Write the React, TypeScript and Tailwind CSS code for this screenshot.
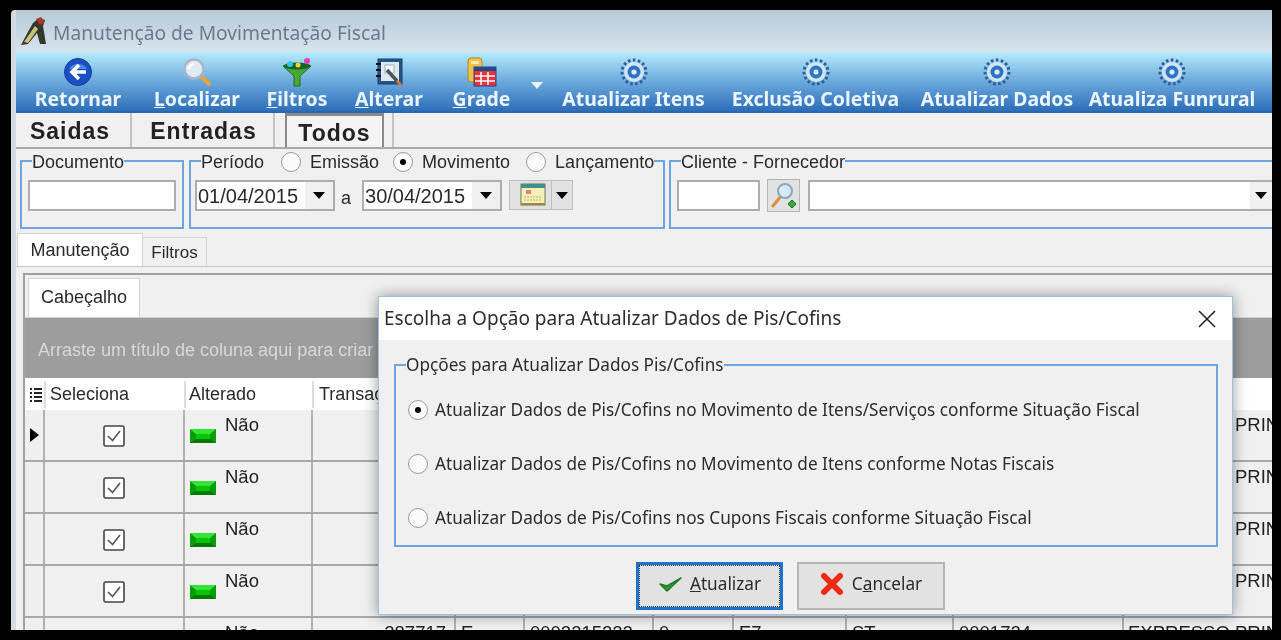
import type { ReactNode } from 'react';

function GearIcon() {
  return (
    <svg width="28" height="28" viewBox="0 0 28 28">
      <circle cx="14" cy="14" r="12" fill="none" stroke="#2f5f9c" strokeWidth="3" strokeDasharray="2.6 2.4" />
      <circle cx="14" cy="14" r="10" fill="#cfe4f5" />
      <circle cx="14" cy="14" r="6.5" fill="#2f74c0" />
      <circle cx="14" cy="14" r="2.6" fill="#dcecf8" />
    </svg>
  );
}

function BackIcon() {
  return (
    <svg width="30" height="30" viewBox="0 0 30 30">
      <circle cx="15" cy="15" r="13.5" fill="#1a50c4" stroke="#123c9a" />
      <path d="M6 12 A10 9 0 0 1 24 12 Z" fill="#4f86e6" />
      <path d="M16 8 L9 15 L16 22 M10 15 H23" fill="none" stroke="#fff" strokeWidth="3.6" />
    </svg>
  );
}

function LensIcon() {
  return (
    <svg width="30" height="30" viewBox="0 0 30 30">
      <path d="M18 18 L27 27" stroke="#e9a53a" strokeWidth="4" strokeLinecap="round" />
      <circle cx="12" cy="12" r="9.5" fill="#dcebf5" stroke="#a9b7c4" strokeWidth="2.5" />
      <path d="M7 12 A5 5 0 0 1 12 7" fill="none" stroke="#fff" strokeWidth="2.5" />
    </svg>
  );
}

function FunnelIcon() {
  return (
    <svg width="30" height="30" viewBox="0 0 30 30">
      <path d="M1 9 H29 L18 19 V29 H12 V19 Z" fill="#4aa832" stroke="#1f6d1a" />
      <ellipse cx="15" cy="9" rx="13.5" ry="3.5" fill="#17662c" />
      <circle cx="8" cy="7" r="3" fill="#37c7e8" />
      <circle cx="16" cy="8" r="2.5" fill="#f2d23c" />
      <circle cx="25" cy="4" r="3" fill="#e23db4" />
    </svg>
  );
}

function NotebookIcon() {
  return (
    <svg width="28" height="28" viewBox="0 0 28 28">
      <rect x="3" y="1" width="24" height="25" fill="#23558a" stroke="#1a3f68" />
      <rect x="6" y="4" width="18" height="19" fill="#dfe8ee" />
      <rect x="10" y="7" width="9" height="8" fill="#f7f9fb" stroke="#9fb0bd" />
      <path d="M1 6 H6 M1 12 H6 M1 18 H6" stroke="#111" strokeWidth="2" />
      <path d="M12 12 L22 23" stroke="#4a5560" strokeWidth="3.5" />
      <path d="M22 23 L26 27" stroke="#d9743a" strokeWidth="3" />
    </svg>
  );
}

function GridIcon() {
  return (
    <svg width="30" height="30" viewBox="0 0 30 30">
      <rect x="1" y="1" width="14" height="24" rx="3" fill="#f0c14a" stroke="#b58620" />
      <rect x="4" y="4" width="8" height="3" fill="#fbe9a8" />
      <rect x="7" y="10" width="22" height="19" fill="#e8333a" stroke="#26478c" />
      <rect x="7" y="10" width="22" height="4" fill="#26478c" />
      <path d="M8 19 H28 M8 24 H28 M14 15 V28 M21 15 V28" stroke="#f6f6f6" strokeWidth="1.6" />
    </svg>
  );
}

function CalendarIcon() {
  return (
    <svg width="28" height="24" viewBox="0 0 28 24">
      <rect x="2" y="1" width="24" height="21" fill="#f6efb8" stroke="#6f7b4a" />
      <rect x="2" y="1" width="24" height="4" fill="#3f8f8a" />
      <rect x="7" y="7" width="5" height="4" fill="#d9828a" />
      <path d="M5 14 H23 M5 17 H23" stroke="#b5b080" strokeDasharray="2 1" />
      <rect x="2" y="20" width="24" height="2" fill="#9a8a3c" />
    </svg>
  );
}

function LookupIcon() {
  return (
    <svg width="26" height="28" viewBox="0 0 26 28">
      <path d="M10 14 L2 24" stroke="#d9913a" strokeWidth="3" strokeLinecap="round" />
      <circle cx="14" cy="9" r="7" fill="#d6e9f6" stroke="#8ea6ba" strokeWidth="2" />
      <path d="M21 18 L25 22 L21 26 L17 22 Z" fill="#2fb03a" stroke="#136b1d" />
    </svg>
  );
}

function Led() {
  return (
    <svg width="26" height="14" viewBox="0 0 26 14" className="mt-[19px] shrink-0">
      <rect width="26" height="14" fill="#0a9a0a" />
      <path d="M0 0 H26 L20 5 H6 Z" fill="#35e535" />
      <rect x="6" y="5" width="14" height="5" fill="#06c406" />
      <path d="M0 14 L6 10 H20 L26 14 Z" fill="#047a04" />
    </svg>
  );
}

function CheckBox() {
  return (
    <svg width="22" height="22" viewBox="0 0 22 22">
      <rect x="1" y="1" width="20" height="20" rx="1.5" fill="#fff" stroke="#444" strokeWidth="1.6" />
      <path d="M5 11 L9.5 15.5 L17 6" fill="none" stroke="#555" strokeWidth="1.6" />
    </svg>
  );
}

function Caret() {
  return <span className="h-0 w-0 border-x-[6px] border-t-[7px] border-x-transparent border-t-black" />;
}

function Radio({ checked = false }: { checked?: boolean }) {
  return (
    <span className="flex h-[20px] w-[20px] shrink-0 items-center justify-center rounded-full border border-[#9a9a9a] bg-[#fafafa]">
      {checked && <span className="h-[6px] w-[6px] rounded-full bg-black" />}
    </span>
  );
}

function DateField({ value }: { value: string }) {
  return (
    <div className="flex h-[31px] w-[140px] items-center justify-between border-2 border-[#adadad] bg-white pl-[1px] text-[20px]">
      <span>{value}</span>
      <span className="flex h-full w-[28px] items-center justify-center bg-[#f0f0f0]"><Caret /></span>
    </div>
  );
}

const TOOLS: { label: ReactNode; icon: ReactNode; cls: string }[] = [
  { label: 'Retornar', icon: <BackIcon />, cls: 'w-[86px] ml-[19px]' },
  { label: <><u>L</u>ocalizar</>, icon: <LensIcon />, cls: 'w-[84px] ml-[34px]' },
  { label: <><u>F</u>iltros</>, icon: <FunnelIcon />, cls: 'w-[58px] ml-[29px]' },
  { label: <><u>A</u>lterar</>, icon: <NotebookIcon />, cls: 'w-[68px] ml-[29px]' },
  { label: <><u>G</u>rade</>, icon: <GridIcon />, cls: 'w-[57px] ml-[30px]' },
  { label: 'Atualizar Itens', icon: <GearIcon />, cls: 'w-[143px] ml-[52px]' },
  { label: 'Exclusão Coletiva', icon: <GearIcon />, cls: 'w-[165px] ml-[28px]' },
  { label: 'Atualizar Dados', icon: <GearIcon />, cls: 'w-[150px] ml-[24px]' },
  { label: 'Atualiza Funrural', icon: <GearIcon />, cls: 'w-[162px] ml-[19px]' },
];

const COLUMNS = [
  { w: 'w-[143px]', text: '287717', cls: 'justify-end pr-[8px]' },
  { w: 'w-[69px]', text: 'E', cls: 'pl-[5px]' },
  { w: 'w-[129px]', text: '0002215222', cls: 'pl-[5px]' },
  { w: 'w-[80px]', text: '0', cls: 'pl-[5px]' },
  { w: 'w-[113px]', text: 'E7', cls: 'pl-[5px]' },
  { w: 'w-[107px]', text: 'ST', cls: 'pl-[5px]' },
  { w: 'w-[170px]', text: '0001724', cls: 'pl-[5px]' },
];

const OPTIONS = [
  'Atualizar Dados de Pis/Cofins no Movimento de Itens/Serviços conforme Situação Fiscal',
  'Atualizar Dados de Pis/Cofins no Movimento de Itens conforme Notas Fiscais',
  'Atualizar Dados de Pis/Cofins nos Cupons Fiscais conforme Situação Fiscal',
];

function GridRow({ first = false }: { first?: boolean }) {
  return (
    <div className="flex h-[52px] shrink-0 border-b-2 border-[#a8a8a8] text-[18.5px] text-[#222]">
      <div className="flex w-[20px] shrink-0 items-center justify-center border-r-2 border-[#b0b0b0] bg-[#efefef]">
        {first && <span className="h-0 w-0 border-y-[7px] border-l-[9px] border-y-transparent border-l-black" />}
      </div>
      <div className="flex w-[140px] shrink-0 items-center justify-center border-r-2 border-[#b0b0b0] pt-[1px]"><CheckBox /></div>
      <div className="flex w-[128px] shrink-0 gap-[9px] border-r-2 border-[#b0b0b0] pl-[5px]">
        <Led />
        <span className="pt-[1px]">Não</span>
      </div>
      {COLUMNS.map((c) => (
        <div key={c.w + c.text} className={`${c.w} ${c.cls} flex shrink-0 border-r-2 border-[#b0b0b0] pt-[1px]`}>{c.text}</div>
      ))}
      <div className="whitespace-nowrap pl-[4px] pt-[1px]">EXPRESSO PRINCIPAL</div>
    </div>
  );
}

export default function App() {
  return (
    <div className="flex h-[640px] w-[1281px] bg-black pb-[10px] pl-[11px] pr-[9px] pt-[10px] font-['Liberation_Sans',sans-serif] blur-[0.5px]">
      <div className="relative flex h-full w-full flex-col overflow-hidden rounded-tl-[4px] border-l-[5px] border-[#d3dce4] bg-[#f0f0f0]">
        {/* Title bar */}
        <div className="flex h-[42px] shrink-0 items-center gap-[6px] bg-gradient-to-b from-[#b8c9d9] to-[#d7e3ed] pl-[3px] font-['Noto_Sans',sans-serif] text-[19.2px] text-[#6c7a88]">
          <svg width="28" height="30" viewBox="0 0 28 30">
            <path d="M2 29 L10 14 L14 7 L20 2 L26 4 L24 10 L27 28 L21 28 L18 17 L9 28 Z" fill="#34382a" />
            <path d="M17 3 L22 1 L26 6 L21 9 Z" fill="#a8392c" />
            <path d="M5 26 L16 10 L19 13 L9 27 Z" fill="#c9c27a" />
          </svg>
          <span className="pt-[4px]">Manutenção de Movimentação Fiscal</span>
        </div>

        {/* Toolbar */}
        <div className="relative flex h-[61px] shrink-0 border-b-2 border-[#2a68b0] bg-gradient-to-b from-[#b6ecfb] via-[#6ba9dd] to-[#2c6eb8] font-['Noto_Sans',sans-serif] text-[19.4px] font-bold text-[#eaf5ff]">
          {TOOLS.map((t, i) => (
            <div key={i} className={`${t.cls} flex shrink-0 flex-col items-center whitespace-nowrap`}>
              <div className="flex h-[36px] items-center justify-center pt-[5px]">{t.icon}</div>
              <div className="leading-[24px]">{t.label}</div>
            </div>
          ))}
          <span className="absolute left-[515px] top-[30px] h-0 w-0 border-x-[6px] border-t-[7px] border-x-transparent border-t-[#e8f3fc]" />
        </div>

        {/* Top tabs */}
        <div className="flex h-[36px] shrink-0 border-b-2 border-[#a8a8a8] text-[23px] font-bold tracking-[1px] text-[#222]">
          <div className="flex w-[116px] items-center justify-center border-r-2 border-[#c4c4c4] pr-[6px] pt-[3px]">Saidas</div>
          <div className="flex w-[143px] items-center justify-center border-r-2 border-[#c4c4c4] pl-[2px] pt-[3px]">Entradas</div>
          <div className="ml-[10px] flex w-[99px] items-center justify-center border-x-2 border-t-[3px] border-[#8a8a8a] border-b-0 bg-[#f4f4f4] pt-[3px]">Todos</div>
          <div className="ml-[8px] border-l-2 border-[#c4c4c4]" />
        </div>

        {/* Filter groups */}
        <div className="flex h-[81px] shrink-0 gap-[5px] pl-[4px] pt-[11px] text-[18px] text-[#2a2a2a]">
          <div className="relative h-[69px] w-[164px] shrink-0 border-2 border-[#6aa6e2] pl-[6px] pt-[18px]">
            <span className="absolute -top-[10px] left-[10px] bg-[#f0f0f0] leading-[20px]">Documento</span>
            <div className="h-[31px] w-[148px] border-2 border-[#adadad] bg-white" />
          </div>
          <div className="relative flex h-[69px] w-[476px] shrink-0 gap-[7px] border-2 border-[#6aa6e2] pl-[4px] pt-[18px]">
            <div className="absolute -top-[10px] left-[10px] flex items-center gap-[3px] bg-[#f0f0f0] leading-[20px]">
              <span className="mr-[14px]">Período</span><Radio /><span className="ml-[6px] mr-[11px]">Emissão</span><Radio checked /><span className="ml-[6px] mr-[13px]">Movimento</span><Radio /><span className="ml-[6px]">Lançamento</span>
            </div>
            <DateField value="01/04/2015" />
            <span className="-ml-[1px] mr-[4px] pt-[5px]">a</span>
            <DateField value="30/04/2015" />
            <div className="flex h-[30px] w-[64px] items-center gap-[4px] border border-[#bdbdbd] bg-[#e1e1e1] pl-[9px]">
              <CalendarIcon />
              <span className="flex h-full items-center border-l border-[#bdbdbd] pl-[4px]"><Caret /></span>
            </div>
          </div>
          <div className="relative -ml-[1px] flex h-[69px] grow gap-[7px] border-y-2 border-l-2 border-[#6aa6e2] pl-[6px] pt-[18px]">
            <span className="absolute -top-[10px] left-[10px] bg-[#f0f0f0] leading-[20px]">Cliente - Fornecedor</span>
            <div className="h-[31px] w-[83px] border-2 border-[#adadad] bg-white" />
            <div className="-mt-[1px] flex h-[33px] w-[33px] items-center justify-center border border-[#b5b5b5] bg-[#e1e1e1]"><LookupIcon /></div>
            <div className="ml-[1px] flex h-[31px] grow items-center justify-end border-2 border-r-0 border-[#adadad] bg-white">
              <span className="flex h-full w-[22px] items-center justify-center bg-[#f0f0f0]"><Caret /></span>
            </div>
          </div>
        </div>

        {/* Inner tabs */}
        <div className="mt-[3px] flex h-[34px] shrink-0 items-end border-b border-[#c8c8c8] pl-[1px] text-[18px] text-[#2a2a2a]">
          <div className="flex h-[33px] w-[126px] items-center justify-center border border-b-0 border-[#d4d4d4] bg-white">Manutenção</div>
          <div className="flex h-[29px] w-[64px] items-center justify-center border border-b-0 border-l-0 border-[#d4d4d4] bg-[#f0f0f0] pt-[2px] text-[17px]">Filtros</div>
        </div>

        {/* Grid panel */}
        <div className="ml-[7px] mt-[6px] flex grow flex-col overflow-hidden border-l-2 border-t-2 border-[#a0a0a0]">
          <div className="flex h-[43px] shrink-0 items-end border-b border-[#d0d0d0] pl-[3px] text-[18px] text-[#2a2a2a]">
            <div className="flex h-[39px] w-[112px] items-center justify-center border border-b-0 border-[#d4d4d4] bg-white pb-[2px]">Cabeçalho</div>
          </div>
          <div className="flex h-[60px] shrink-0 items-center bg-[#9d9d9d] pl-[13px] pt-[4px] text-[18px] text-[#d8d8d8]">Arraste um título de coluna aqui para criar um grupo</div>
          <div className="flex h-[32px] shrink-0 items-center bg-white pt-[1px] text-[18px] text-[#2a2a2a]">
            <div className="flex w-[19px] justify-center pl-[2px]">
              <svg width="12" height="16" viewBox="0 0 12 16"><path d="M0 2 H2 M4 2 H12 M0 6 H2 M4 6 H12 M0 10 H2 M4 10 H12 M0 14 H2 M4 14 H12" stroke="#222" strokeWidth="2" /></svg>
            </div>
            <div className="w-[140px] border-l-2 border-[#dcdcdc] pl-[4px]">Seleciona</div>
            <div className="w-[128px] border-l-2 border-[#dcdcdc] pl-[3px]">Alterado</div>
            <div className="border-l-2 border-[#dcdcdc] pl-[5px]">Transação</div>
          </div>
          <GridRow first />
          <GridRow />
          <GridRow />
          <GridRow />
          <GridRow />
        </div>

        {/* Dialog */}
        <div className="absolute left-[362px] top-[286px] flex h-[319px] w-[855px] flex-col border border-[#9fc0de] bg-[#f0f0f0] font-['Noto_Sans',sans-serif] text-[17.2px] text-[#2c2c2c] shadow-[0_0_14px_rgba(0,0,0,0.4)]">
          <div className="flex h-[43px] shrink-0 items-center justify-between bg-white pl-[5px] pr-[15px] text-[19px]">
            <span>Escolha a Opção para Atualizar Dados de Pis/Cofins</span>
            <svg width="20" height="20" viewBox="0 0 20 20"><path d="M2 2 L18 18 M18 2 L2 18" stroke="#222" strokeWidth="1.6" /></svg>
          </div>
          <div className="relative ml-[15px] mt-[24px] flex h-[183px] w-[824px] shrink-0 flex-col border-2 border-[#6aa6e2] pl-[12px] pt-[17px]">
            <span className="absolute -top-[11px] left-[10px] bg-[#f0f0f0] leading-[20px]">Opções para Atualizar Dados Pis/Cofins</span>
            {OPTIONS.map((o, i) => (
              <div key={o} className="flex h-[54px] shrink-0 items-center gap-[7px]">
                <Radio checked={i === 0} />
                <span className="whitespace-nowrap">{o}</span>
              </div>
            ))}
          </div>
          <div className="ml-[257px] mt-[15px] flex gap-[14px]">
            <div className="flex h-[48px] w-[147px] items-center justify-center gap-[8px] border-[3px] border-[#1b72c8] bg-[#e2e2e2] pb-[4px] outline-1 -outline-offset-4 outline-dotted outline-[#333]">
              <svg width="24" height="18" viewBox="0 0 24 18"><path d="M2 9 L9 16 L23 3 L9 11 Z" fill="#2f9e35" stroke="#1f7a28" strokeWidth="1.5" strokeLinejoin="round" /></svg>
              <span><u>A</u>tualizar</span>
            </div>
            <div className="flex h-[48px] w-[148px] items-center justify-center gap-[8px] border-2 border-[#b5b5b5] bg-[#e2e2e2] pb-[4px]">
              <svg width="24" height="24" viewBox="0 0 24 24"><path d="M4 4 L20 20 M20 4 L4 20" stroke="#ee2a12" strokeWidth="6" strokeLinecap="round" /></svg>
              <span>C<u>a</u>ncelar</span>
            </div>
          </div>
        </div>
      </div>
    </div>
  );
}
